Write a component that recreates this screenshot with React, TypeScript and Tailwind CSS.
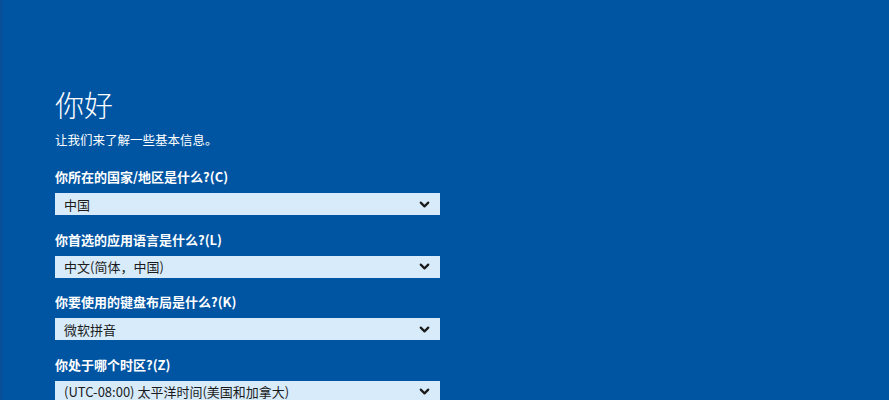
import { ChevronDown } from 'lucide-react'

const FONT = { fontFamily: '"Segoe UI", "Noto Sans CJK SC", "Noto Sans", sans-serif' }

function Field({ label, value }: { label: string; value: string }) {
  return (
    <div className="flex flex-col">
      <p className="text-[13px] font-bold text-white leading-[18px] h-[18px]">{label}</p>
      <div className="mt-[7px] w-[385px] h-[22px] bg-[#d7ebfa] flex items-center justify-between pl-[9px] pr-[8px]">
        <span className="text-[13px] text-[#1b1b1b] leading-none">{value}</span>
        <ChevronDown size={15} strokeWidth={3.5} className="text-[#1b1b1b]" />
      </div>
    </div>
  )
}

export default function App() {
  return (
    <div className="w-[889px] h-[400px] overflow-hidden bg-[#0055a3] border-l-[3px] border-[#084f9b]" style={FONT}>
      <div className="pl-[52px] pt-[85px] flex flex-col">
        <h1 className="text-[29px] font-light text-white leading-[38px]">你好</h1>
        <p className="mt-[8px] text-[12.5px] text-white leading-[18px]">让我们来了解一些基本信息。</p>
        <div className="mt-[19px] flex flex-col gap-[15.5px]">
          <Field label="你所在的国家/地区是什么?(C)" value="中国" />
          <Field label="你首选的应用语言是什么?(L)" value="中文(简体，中国)" />
          <Field label="你要使用的键盘布局是什么?(K)" value="微软拼音" />
          <Field label="你处于哪个时区?(Z)" value="(UTC-08:00) 太平洋时间(美国和加拿大)" />
        </div>
      </div>
    </div>
  )
}
